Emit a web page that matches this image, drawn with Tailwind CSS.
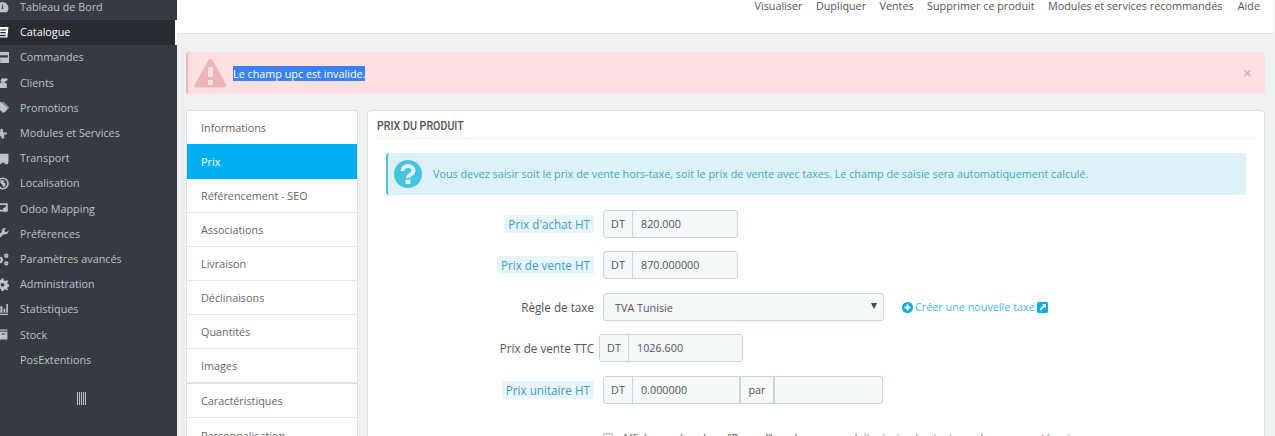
<!DOCTYPE html>
<html lang="fr">
<head>
    <meta charset="UTF-8">
    <title>Prix du produit</title>
    <script src="https://cdn.jsdelivr.net/npm/@tailwindcss/browser@4"></script>
</head>
<body class="h-[436px] w-[1275px] overflow-hidden bg-[#eff1f2] font-['Open_Sans',sans-serif] text-[10.8px] text-[#555]">
<div class="flex h-[436px]">
    <!-- menu -->
    <nav class="relative z-10 w-[177px] shrink-0 bg-[#363a41] text-[#bcc2c8] -mt-[5.4px] h-[442px]">
        <ul>
            <li class="flex h-[25.2px] items-center"><svg class="ml-[-4px] w-[13px] h-[13px]" viewBox="0 0 12 12"><path fill="#bcc2c8" d="M6 1a5.500 5.500 0 0 0-5.500 5.500c0 1.500.5 2.800 1.300 3.800h8.400c.8-1 1.300-2.300 1.300-3.800A5.500 5.500 0 0 0 6 1zm.7 6.400H5.300L5.800 3h.6z"/></svg><span class="ml-[11px]">Tableau de Bord</span></li>
            <li class="relative flex h-[25.2px] w-[177px] items-center border-r-2 border-white bg-[#282b30] text-white"><svg class="ml-[-4px] w-[13px] h-[13px]" viewBox="0 0 12 12"><path fill="#fff" fill-rule="evenodd" d="M0 1h11.500l-1 9.500H0zm4 2v1.200h5.500V3zm0 2.500v1.200h5V5.500zM1 8v1.500h8V8z"/></svg><span class="ml-[11px]">Catalogue</span></li>
            <li class="flex h-[25.2px] items-center"><svg class="ml-[-4px] w-[13px] h-[13px]" viewBox="0 0 12 12"><path fill="#bcc2c8" fill-rule="evenodd" d="M0 1h12v10H0zm1 3v2h10V4zm0 4v2h3V8z"/></svg><span class="ml-[11px]">Commandes</span></li>
            <li class="flex h-[25.2px] items-center"><svg class="ml-[-4px] w-[13px] h-[13px]" viewBox="0 0 12 12"><circle cx="6.500" cy="4.200" r="2.200" fill="#bcc2c8"/><circle cx="9.300" cy="3.200" r="1.400" fill="#bcc2c8"/><path fill="#bcc2c8" d="M3 11V8c0-1 .8-1.700 1.700-1.700h3.800c.9 0 1.500.7 1.500 1.700v3z"/></svg><span class="ml-[11px]">Clients</span></li>
            <li class="flex h-[25.2px] items-center"><svg class="ml-[-4px] w-[13px] h-[13px]" viewBox="0 0 12 12"><path fill="#bcc2c8" d="M0 1h5l6 5.500L6.500 11 0 5zm6.500-.500L12 6l-4 4.500L7.500 10 11 6 6 1z"/></svg><span class="ml-[11px]">Promotions</span></li>
            <li class="flex h-[25.2px] items-center"><svg class="ml-[-4px] w-[13px] h-[13px]" viewBox="0 0 12 12"><path fill="#bcc2c8" d="M1 5h3V2.500a1.300 1.300 0 0 1 2.500 0V5H10v2H7.500v3.500H5V8.500H3V10H1z"/></svg><span class="ml-[11px]">Modules et Services</span></li>
            <li class="flex h-[25.2px] items-center"><svg class="ml-[-4px] w-[13px] h-[13px]" viewBox="0 0 12 12"><path fill="#bcc2c8" d="M0 1.500h11.500V10H0zM2 10h3v1.200H2zm6 0h3v1.200H8z"/></svg><span class="ml-[11px]">Transport</span></li>
            <li class="flex h-[25.2px] items-center"><svg class="ml-[-4px] w-[13px] h-[13px]" viewBox="0 0 12 12"><circle cx="6.300" cy="6" r="4.800" fill="none" stroke="#bcc2c8" stroke-width="1.500"/><path fill="#bcc2c8" d="M4 3h3.500L7 5 9 6l-.5 2.500L6.500 9 5.500 6.500 4 5.500z"/></svg><span class="ml-[11px]">Localisation</span></li>
            <li class="flex h-[25.2px] items-center"><svg class="ml-[-4px] w-[13px] h-[13px]" viewBox="0 0 12 12"><path fill="none" stroke="#bcc2c8" stroke-width="1.600" d="M1 2h9v6H1z"/><path fill="#bcc2c8" d="M6.500 5.500h1.500V4l3.500 3-3.500 3V8.500H6.500z"/></svg><span class="ml-[11px]">Odoo Mapping</span></li>
            <li class="flex h-[25.2px] items-center"><svg class="ml-[-4px] w-[13px] h-[13px]" viewBox="0 0 12 12"><path fill="#bcc2c8" d="M11.500 3 9.500 5 7.500 3.500 9 1.200C7 .500 5 2 5.300 4.500L.5 9.500l1.800 1.800L7 6.700C10 7.500 12 5.500 11.500 3z"/></svg><span class="ml-[11px]">Préférences</span></li>
            <li class="flex h-[25.2px] items-center"><svg class="ml-[-4px] w-[13px] h-[13px]" viewBox="0 0 12 12"><path fill="#bcc2c8" fill-rule="evenodd" d="M3.500 3.500a3 3 0 1 0 .1 6 3 3 0 0 0-.1-6zm0 2a1 1 0 1 1 0 2 1 1 0 0 1 0-2zM9.500.5a2 2 0 1 0 0 4 2 2 0 0 0 0-4zm0 1.500a.5.5 0 1 1 0 1 .5.500 0 0 1 0-1zm0 5.500a2 2 0 1 0 0 4 2 2 0 0 0 0-4zm0 1.500a.5.5 0 1 1 0 1 .5.500 0 0 1 0-1z"/></svg><span class="ml-[11px]">Paramètres avancés</span></li>
            <li class="flex h-[25.2px] items-center"><svg class="ml-[-4px] w-[13px] h-[13px]" viewBox="0 0 12 12"><path fill="#bcc2c8" fill-rule="evenodd" d="M5 .5h2l.3 1.700 1.200.5L10 1.800l1.300 1.400-1 1.400.6 1.200 1.600.2v2l-1.600.3-.6 1.200 1 1.400L10 11.300l-1.500-1-1.200.6L7 12H5l-.3-1.600-1.200-.5-1.500 1-1.300-1.400 1-1.400-.5-1.200L0 7V5l1.700-.3.500-1.200-1-1.400L2.500.800l1.400 1 1-.5zM6 4.500a1.700 1.700 0 1 0 0 3.400 1.700 1.700 0 0 0 0-3.400z"/></svg><span class="ml-[11px]">Administration</span></li>
            <li class="flex h-[25.2px] items-center"><svg class="ml-[-4px] w-[13px] h-[13px]" viewBox="0 0 12 12"><path fill="#bcc2c8" d="M0 10h11v1H0zm1-4h2v3H1zm3-3h2v6H4zm3 2h1.500v4H7zm2.500-4H11v8H9.500z"/></svg><span class="ml-[11px]">Statistiques</span></li>
            <li class="flex h-[25.2px] items-center"><svg class="ml-[-4px] w-[13px] h-[13px]" viewBox="0 0 12 12"><path fill="#8a8f95" d="M0 1h10.500v2H0z"/><path fill="#bcc2c8" fill-rule="evenodd" d="M0 3.500h10.500v7H0zm5 1.500v1h3.500V5z"/></svg><span class="ml-[11px]">Stock</span></li>
            <li class="flex h-[25.2px] items-center pl-5"><span>PosExtentions</span></li>
        </ul>
        <div class="mt-[20px] ml-[77px] flex h-[13px] w-[10px] gap-px">
            <span class="w-px bg-[#bcc2c8]"></span><span class="w-px bg-[#bcc2c8]"></span><span class="w-px bg-[#bcc2c8]"></span><span class="w-px bg-[#bcc2c8]"></span><span class="w-px bg-[#bcc2c8]"></span>
        </div>
    </nav>

    <main class="min-w-0 flex-1">
        <!-- barre d'actions -->
        <div class="flex h-[34px] w-[1097px] justify-end gap-[13.4px] border-b border-[#dfe2e3] bg-white pr-[14px] leading-[11px] text-[#555]">
            <span>Visualiser</span><span>Dupliquer</span><span>Ventes</span><span>Supprimer ce produit</span><span>Modules et services recommandés</span><span class="ml-[2px]">Aide</span>
        </div>

        <!-- erreur -->
        <div class="relative ml-[9px] mt-[18px] flex h-[42px] w-[1079px] items-center rounded-[3px] border-l-2 border-[#f0b4b8] bg-[#ffe0e2]">
            <svg class="ml-[6px] h-[30px] w-[33px]" viewBox="0 0 33 30"><path fill="#ebb5b9" fill-rule="evenodd" d="M16.500 1c1 0 1.800.6 2.300 1.500l13.500 24c.8 1.500-.2 3-1.800 3H2.500c-1.600 0-2.600-1.500-1.800-3l13.500-24C14.700 1.600 15.500 1 16.500 1zM14 9v10h5V9zm0 13v5h5v-5z"/></svg>
            <span class="ml-[6px] bg-[#3b82f6] leading-[15px] text-white">Le champ upc est invalide.</span>
            <span class="absolute right-[13px] top-[13px] text-[16px] font-semibold leading-[16px] text-[#c9b7b9]">×</span>
        </div>

        <div class="mt-4 flex items-start">
            <!-- onglets -->
            <ul class="ml-[9px] w-[172px] shrink-0 overflow-hidden rounded-t-[3px] border border-b-0 border-[#dcdfe0] bg-white text-[#666]">
                <li class="flex h-[33px] items-center pl-[14px] pt-[2px]">Informations</li>
                <li class="-mx-px flex h-[35px] items-center bg-[#00aff0] pl-[15px] pt-[2px] text-white">Prix</li>
                <li class="flex h-[34px] items-center border-b border-[#e6e8e9] pl-[14px] pt-[2px]">Référencement - SEO</li>
                <li class="flex h-[34px] items-center border-b border-[#e6e8e9] pl-[14px] pt-[2px]">Associations</li>
                <li class="flex h-[34px] items-center border-b border-[#e6e8e9] pl-[14px] pt-[2px]">Livraison</li>
                <li class="flex h-[34px] items-center border-b border-[#e6e8e9] pl-[14px] pt-[2px]">Déclinaisons</li>
                <li class="flex h-[34px] items-center border-b border-[#e6e8e9] pl-[14px] pt-[2px]">Quantités</li>
                <li class="flex h-[35px] items-center border-b-2 border-[#dfe2e3] pl-[14px] pt-[2px]">Images</li>
                <li class="flex h-[34px] items-center border-b border-[#e6e8e9] pl-[14px] pt-[2px]">Caractéristiques</li>
                <li class="flex h-[34px] items-center pl-[14px] pt-[2px]">Personnalisation</li>
            </ul>

            <!-- panneau prix -->
            <section class="ml-[9px] h-[400px] w-[898px] shrink-0 rounded-t-[4px] border border-[#dcdfe0] bg-white px-[9px]">
                <h2 class="flex h-[28px] items-center border-b border-[#eeeff0] pt-[2px] font-['Roboto',sans-serif] text-[13px] font-medium text-[#555]"><span class="origin-left scale-x-[0.82]">PRIX DU PRODUIT</span></h2>
                <div class="ml-[9px] mt-[14px] flex h-[42px] w-[860px] items-center rounded-[3px] border-l-2 border-[#4bc5de] bg-[#dcf2f8] pl-[6px] text-[#3da9c2]">
                    <svg class="h-7 w-7 shrink-0" viewBox="0 0 28 28"><circle cx="14" cy="14" r="14" fill="#48c3de"/><path fill="none" stroke="#dcf2f8" stroke-width="4" d="M8.500 11c0-3 2.500-5 5.500-5s5.500 2 5.500 4.800c0 4-5.500 3.700-5.500 7.200"/><rect x="11.500" y="19.500" width="5" height="4.500" fill="#dcf2f8"/></svg>
                    <span class="ml-[11px]">Vous devez saisir soit le prix de vente hors-taxe, soit le prix de vente avec taxes. Le champ de saisie sera automatiquement calculé.</span>
                </div>

                <!-- formulaire -->
                <div class="mt-[15px]">
                    <div class="flex h-[28px] items-center">
                        <div class="w-[217px] pt-[2px] text-right text-[11.7px]"><span class="rounded-[2px] bg-[#e8f5fb] px-1 py-[1px] text-[#3c9dc9]">Prix d'achat HT</span></div>
                        <div class="ml-[9px] flex h-[28px] w-[135px] rounded-[3px] border border-[#c9d7dc] bg-[#f4f8f9]"><span class="flex w-[29px] items-center justify-center border-r border-[#c9d7dc]">DT</span><span class="flex items-center pl-2">820.000</span></div>
                    </div>
                    <div class="mt-[13px] flex h-[28px] items-center">
                        <div class="w-[217px] pt-[2px] text-right text-[11.7px]"><span class="rounded-[2px] bg-[#e8f5fb] px-1 py-[1px] text-[#3c9dc9]">Prix de vente HT</span></div>
                        <div class="ml-[9px] flex h-[28px] w-[135px] rounded-[3px] border border-[#c9d7dc] bg-[#f4f8f9]"><span class="flex w-[29px] items-center justify-center border-r border-[#c9d7dc]">DT</span><span class="flex items-center pl-2">870.000000</span></div>
                    </div>
                    <div class="mt-[14px] flex h-[28px] items-center">
                        <div class="w-[217px] pt-[2px] text-right text-[11.7px]">Règle de taxe</div>
                        <div class="relative ml-[9px] flex h-[28px] w-[281px] items-center rounded-[3px] border border-[#c9d7dc] bg-[#f4f8f9] pl-[11px] pt-[2px]">TVA Tunisie<span class="absolute right-[6px] top-[9px] h-0 w-0 border-x-[3px] border-t-[6px] border-x-transparent border-t-[#444]"></span></div>
                        <svg class="ml-[18px] h-[11px] w-[11px]" viewBox="0 0 11 11"><circle cx="5.500" cy="5.500" r="5.500" fill="#00aff0"/><path fill="#fff" d="M4.500 2.500h2v2h2v2h-2v2h-2v-2h-2v-2h2z"/></svg>
                        <span class="ml-[2px] text-[#3fb8e8]">Créer une nouvelle taxe</span>
                        <svg class="ml-[2px] h-[11px] w-[11px]" viewBox="0 0 11 11"><rect width="11" height="11" rx="1.500" fill="#00aff0"/><path fill="#fff" d="M5 2h4v4L7.700 4.800 4 8.500 2.500 7l3.700-3.700z"/></svg>
                    </div>
                    <div class="mt-[13px] flex h-[28px] items-center">
                        <div class="w-[217px] pt-[2px] text-right text-[11.7px]">Prix de vente TTC</div>
                        <div class="ml-[5px] flex h-[28px] w-[144px] rounded-[3px] border border-[#c9d7dc] bg-[#f4f8f9]"><span class="flex w-[29px] items-center justify-center border-r border-[#c9d7dc]">DT</span><span class="flex items-center pl-2">1026.600</span></div>
                    </div>
                    <div class="mt-[14px] flex h-[28px] items-center">
                        <div class="w-[217px] pt-[2px] text-right text-[11.7px]"><span class="rounded-[2px] bg-[#e8f5fb] px-1 py-[1px] text-[#3c9dc9]">Prix unitaire HT</span></div>
                        <div class="ml-[9px] flex h-[28px] w-[280px] rounded-[3px] border border-[#c9d7dc] bg-[#f4f8f9]"><span class="flex w-[29px] items-center justify-center border-r border-[#c9d7dc]">DT</span><span class="flex w-[108px] items-center border-r-2 border-[#c9d7dc] pl-2">0.000000</span><span class="flex w-[34px] items-center justify-center border-r-2 border-[#c9d7dc]">par</span></div>
                    </div>
                    <div class="mt-[27px] ml-[226px] flex h-[14px] items-center">
                        <span class="h-[10px] w-[10px] rounded-[2px] border border-[#bbb] bg-[#eee]"></span>
                        <span class="ml-[9px] whitespace-nowrap">Afficher un bandeau "Promo!" sur la page produit, ainsi qu'en texte sur les pages catégories.</span>
                    </div>
                </div>
            </section>
        </div>
    </main>
</div>
</body>
</html>
